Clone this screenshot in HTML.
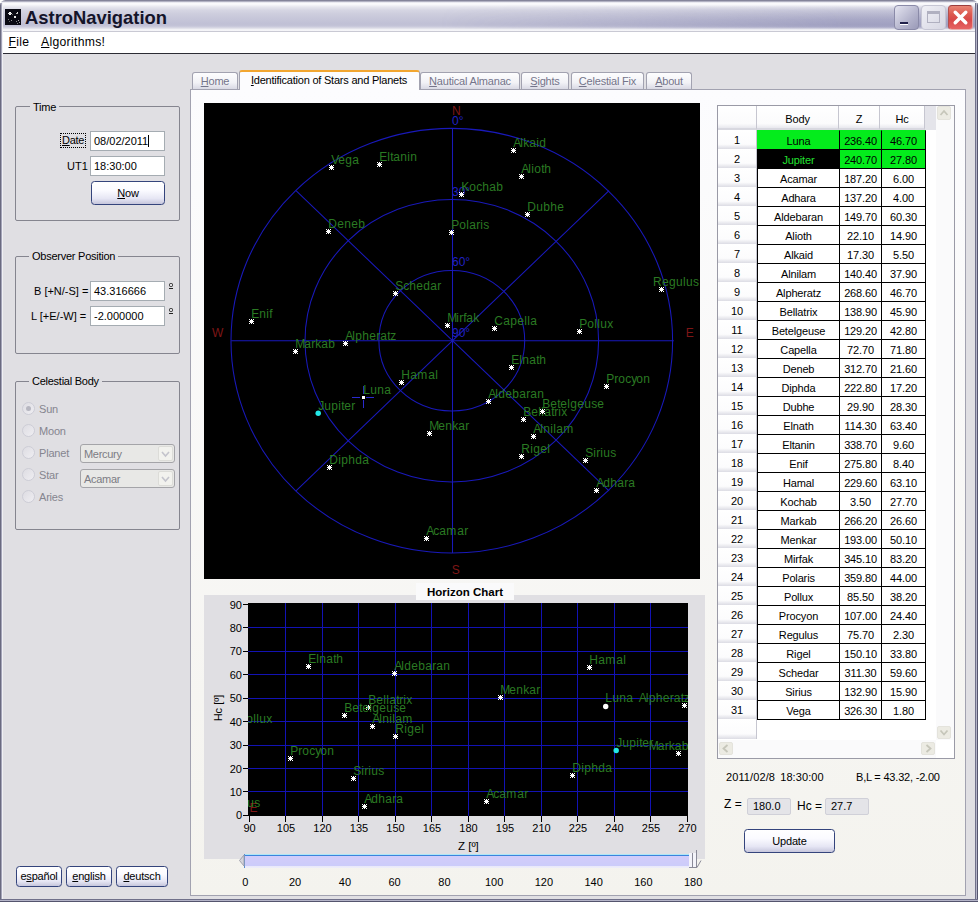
<!DOCTYPE html>
<html><head><meta charset="utf-8"><title>AstroNavigation</title>
<style>
*{box-sizing:border-box;margin:0;padding:0}
html,body{width:978px;height:902px;overflow:hidden;background:#e0dfe3}
body{position:relative;font-family:"Liberation Sans",sans-serif;font-size:11px;color:#000;line-height:13px}
.abs{position:absolute}
u{text-decoration:underline}
/* title bar */
#title{left:0;top:0;width:978px;height:32px;background:linear-gradient(#7c7c92 0,#8c8ca2 1px,#d8d8e4 2px,#fbfbfd 3px,#f8f8fb 4.5px,#e6e6ee 7px,#d6d6e3 10px,#cdcddd 14px,#c6c6d9 19px,#c0c0d5 24px,#c4c4d8 26px,#dadae5 28px,#f2f2f6 29.5px,#f6f6f9 31px,#9c9cae 32px)}
#title2{left:440px;top:0;width:538px;height:32px;background:linear-gradient(rgba(100,100,150,0) 0,rgba(100,100,150,0) 5px,rgba(100,100,155,.12) 10px,rgba(100,100,155,.3) 20px,rgba(100,100,155,.36) 27px,rgba(100,100,155,.1) 29px,rgba(100,100,150,0) 30px);-webkit-mask-image:linear-gradient(90deg,transparent 0,#000 75%);mask-image:linear-gradient(90deg,transparent 0,#000 75%)}
#ttext{left:25px;top:7px;font-weight:bold;font-size:18.4px;line-height:22px;color:#14142a;white-space:nowrap}
#icon{left:5px;top:9px;width:16px;height:16px;background:#0a0a14}
.wb{top:5px;width:25px;height:25px;border-radius:4px}
/* menu */
#menu{left:3px;top:32px;width:972px;height:22px;background:#fff;border-bottom:1px solid #2c2c34}
#menu span{position:absolute;top:2.8px;font-size:12.2px;line-height:15px;letter-spacing:.3px}
/* borders */
.bl{left:0;top:3px;width:3px;height:899px;background:linear-gradient(90deg,#6a6a80 0,#6a6a80 1px,#a4a4b8 1px,#a4a4b8 2px,#f0f0f4 2px,#f0f0f4 3px)}
.br{left:975px;top:3px;width:3px;height:899px;background:linear-gradient(90deg,#70708a 0,#70708a 1px,#b4b4c8 1px,#b4b4c8 2px,#55556e 2px,#55556e 3px)}
.bb{left:0;top:899px;width:978px;height:3px;background:linear-gradient(#70708a 0,#70708a 1px,#b4b4c8 1px,#b4b4c8 2px,#55556e 2px,#55556e 3px)}
/* group boxes */
.gb{border:1px solid #85858f;border-radius:2px}
.gbl{background:#e0dfe3;padding:0 3px;white-space:nowrap;letter-spacing:-.25px}
.inp{background:#fff;border:1px solid #a5acb2;padding:3.5px 0 0 3px;white-space:nowrap;height:20px;margin-top:-.5px}
.btn{letter-spacing:-.2px;border:1px solid #34447c;border-radius:3.5px;background:linear-gradient(#ffffff 0,#fafaff 40%,#e6e6f4 75%,#c6c6dc 100%);text-align:center;white-space:nowrap}
.dis{color:#85858f;letter-spacing:-.2px;margin-top:.8px}
.ord{width:4px;height:4px;border:1px solid #222;border-radius:1.5px}
.ord:after{content:'';position:absolute;left:-1px;top:4px;width:4px;height:1px;background:#222}
.radio{width:13px;height:13px;border-radius:50%;border:1px solid #cdcdd6;background:linear-gradient(135deg,#dddce2,#efeef2)}
.combo{border:1px solid #a4a4a8;border-radius:3px;background:#e8e8e6;color:#7c7c84;height:19px;padding:3px 0 0 3px;letter-spacing:-.3px}
.cbtn{width:15px;height:15px;border:1px solid #dcdcd8;border-radius:2px;background:#f2f2ee}
/* tabs */
.tab{top:72px;letter-spacing:-.2px;height:17px;border:1px solid #a2a2b0;border-bottom:none;border-radius:3px 3px 0 0;background:linear-gradient(#fdfdfe 0,#f2f2f6 60%,#d9d9e4 100%);color:#74748a;text-align:center;padding-top:2px;white-space:nowrap}
.tabsel{top:70px;height:20px;letter-spacing:-.22px;text-indent:-1px;border:1px solid #a2a2b0;border-top:2px solid #f2a630;border-bottom:none;border-radius:3px 3px 0 0;background:#fcfcfe;color:#000;text-align:center;padding-top:1.7px;white-space:nowrap}
#page{left:190px;top:89px;width:776px;height:807px;border:1px solid #a2a2b0;background:linear-gradient(#fcfcfe,#f4f3ee)}
/* horizon */
#hpanel{left:204px;top:595px;width:501px;height:264px;background:#e0dfe3}
#htitle{left:416px;top:583px;width:98px;height:17px;background:#fafafb;font-weight:bold;font-size:11.5px;text-align:center;padding-top:3px}
.tick{background:#000}
.axl{font-size:11px;line-height:14px}
/* table */
.grid{background:#fff;border:1px solid #9a9aa6}
.hdr{background:#e4e4ea}
.hcell{background:linear-gradient(#ffffff 0,#fbfbfc 80%,#e8e8ee 100%);border-right:1px solid #c6c6d0;border-bottom:2px solid #d8d8e0;text-align:center;padding-top:7px;font-size:11px;letter-spacing:-.1px}
.rh{background:linear-gradient(#ffffff 0,#fcfcfd 75%,#dcdce4 100%);border-right:1px solid #c6c6d0;text-align:center;padding-top:4px}
.c{border:1px solid #000;background:#fff;text-align:center;padding-top:4px;letter-spacing:-.15px}
.g{background:#04ec1c}
.g1{border-top-color:#04ec1c}
.gl{border-left-color:#04ec1c}
.k{background:#000;color:#22e030}
.ro{background:#e4e4e8;border:1px solid #d0d0d8;border-radius:2px;height:17px;padding:1px 0 0 5px}
.sb{background:#fafafb}
.sbtn{border:1px solid #e4e3dc;border-radius:2px;background:#ecebe3}
</style></head><body>

<!-- window frame -->
<div class="abs" id="title"></div><div class="abs" id="title2"></div>
<div class="abs bl"></div><div class="abs br"></div><div class="abs bb"></div>
<svg class="abs" style="left:0;top:0" width="6" height="6"><path d="M0 0h5.5A5.5 5.5 0 0 0 0 5.5z" fill="#fff"/></svg>
<svg class="abs" style="left:972px;top:0" width="6" height="6"><path d="M6 0h-5.5A5.5 5.5 0 0 1 6 5.5z" fill="#fff"/></svg>
<div class="abs" id="icon">
<svg width="16" height="16"><g fill="#fff"><rect x="4" y="3" width="2" height="3"/><rect x="3" y="4" width="4" height="1" fill="#ddd"/><rect x="9" y="7" width="2" height="2" fill="#e8e8e8"/><rect x="12" y="3" width="1" height="2" fill="#ddd"/><rect x="11" y="4" width="2" height="1" fill="#bbb"/><rect x="3" y="10" width="1" height="1" fill="#777"/><rect x="6" y="11" width="1" height="1" fill="#999"/><rect x="4" y="12" width="1" height="1" fill="#666"/><rect x="11" y="12" width="1" height="1" fill="#888"/><rect x="13" y="11" width="1" height="1" fill="#aaa"/><rect x="14" y="13" width="1" height="1" fill="#999"/><rect x="12" y="14" width="1" height="1" fill="#777"/><rect x="7" y="5" width="1" height="1" fill="#666"/></g></svg>
</div>
<div class="abs" id="ttext">AstroNavigation</div>
<!-- window buttons -->
<div class="abs wb" style="left:894px;border:1px solid #8a8aa8;background:linear-gradient(135deg,#e4e4f0,#b4b4cc 60%,#9a9ab8)"><div class="abs" style="left:5px;top:16px;width:8px;height:3px;background:#20204a;border-bottom:1px solid #fff"></div></div>
<div class="abs wb" style="left:921px;border:1px solid #c6c6d4;background:linear-gradient(135deg,#f0f0f6,#d6d6e2)"><div class="abs" style="left:5px;top:5px;width:13px;height:12px;border:1px solid #b0b0c0;border-top:3px solid #b0b0c0"></div></div>
<div class="abs wb" style="left:948px;border:1px solid #b05050;border-top-color:#9a3c3c;border-bottom-color:#e8b0b0;border-right-color:#e0a0a0;background:linear-gradient(#e88474 0,#dc5a50 35%,#d84848 60%,#e66464 100%)">
<svg class="abs" style="left:3px;top:3px" width="17" height="17"><path d="M3.2 3.2L13.8 13.8M13.8 3.2L3.2 13.8" stroke="#fff" stroke-width="3.4" stroke-linecap="round"/></svg></div>

<div class="abs" id="menu"><span style="left:5.5px"><u>F</u>ile</span><span style="left:38px"><u>A</u>lgorithms!</span></div>

<!-- left panel -->

<div class="abs gb" style="left:15px;top:105.5px;width:165px;height:115.5px"></div>
<div class="abs gbl" style="left:30px;top:100.5px">Time</div>
<div class="abs" style="left:60px;top:133px;border:1px dotted #000;padding:0 1px;height:15px;letter-spacing:-.3px"><u>D</u>ate</div>
<div class="abs inp" style="left:90px;top:131px;width:75px">08/02/2011<span style="border-right:1px solid #000;margin-left:0"></span></div>
<div class="abs" style="left:67px;top:160px">UT1</div>
<div class="abs inp" style="left:90px;top:156px;width:75px">18:30:00</div>
<div class="abs btn" style="left:91px;top:181px;width:74px;height:24px;padding-top:5px"><u>N</u>ow</div>

<div class="abs gb" style="left:15px;top:256px;width:165px;height:98px"></div>
<div class="abs gbl" style="left:29px;top:249.5px">Observer Position</div>
<div class="abs" style="left:34px;top:285px;white-space:nowrap">B [+N/-S] =</div>
<div class="abs inp" style="left:90px;top:281px;width:75px">43.316666</div>
<div class="abs ord" style="left:169px;top:283px"></div>
<div class="abs" style="left:31px;top:310px;white-space:nowrap">L [+E/-W] =</div>
<div class="abs inp" style="left:90px;top:306px;width:75px">-2.000000</div>
<div class="abs ord" style="left:169px;top:308px"></div>

<div class="abs gb" style="left:15px;top:380.5px;width:165px;height:149px"></div>
<div class="abs gbl" style="left:29px;top:374.5px">Celestial Body</div>
<div class="abs radio" style="left:22px;top:402px"><div class="abs" style="left:3px;top:3px;width:5px;height:5px;border-radius:50%;background:#b6b6c0"></div></div>
<div class="abs dis" style="left:39px;top:402px">Sun</div>
<div class="abs radio" style="left:22px;top:424px"></div>
<div class="abs dis" style="left:39px;top:424px">Moon</div>
<div class="abs radio" style="left:22px;top:446px"></div>
<div class="abs dis" style="left:39px;top:446px">Planet</div>
<div class="abs radio" style="left:22px;top:468px"></div>
<div class="abs dis" style="left:39px;top:468px">Star</div>
<div class="abs radio" style="left:22px;top:490px"></div>
<div class="abs dis" style="left:39px;top:490px">Aries</div>
<div class="abs combo" style="left:80px;top:444px;width:95px">Mercury</div>
<div class="abs cbtn" style="left:158px;top:446px"><svg width="13" height="13"><path d="M3 5l3.5 4L10 5" stroke="#c4c4cc" stroke-width="1.6" fill="none"/></svg></div>
<div class="abs combo" style="left:80px;top:469px;width:95px">Acamar</div>
<div class="abs cbtn" style="left:158px;top:471px"><svg width="13" height="13"><path d="M3 5l3.5 4L10 5" stroke="#c4c4cc" stroke-width="1.6" fill="none"/></svg></div>

<div class="abs btn" style="left:16px;top:866px;width:46px;height:21px;padding-top:3px">e<u>s</u>pañol</div>
<div class="abs btn" style="left:66px;top:866px;width:46px;height:21px;padding-top:3px"><u>e</u>nglish</div>
<div class="abs btn" style="left:116px;top:866px;width:52px;height:21px;padding-top:3px"><u>d</u>eutsch</div>

<!-- tabs -->
<div class="abs" id="page"></div>
<div class="abs tab" style="left:192px;width:46px"><u>H</u>ome</div>
<div class="abs tabsel" style="left:239px;width:181px"><u>I</u>dentification of Stars and Planets</div>
<div class="abs tab" style="left:420px;width:100px"><u>N</u>autical Almanac</div>
<div class="abs tab" style="left:521px;width:48px"><u>S</u>ights</div>
<div class="abs tab" style="left:571px;width:73px"><u>C</u>elestial Fix</div>
<div class="abs tab" style="left:646px;width:46px"><u>A</u>bout</div>

<svg class="abs" style="left:204px;top:103px" width="496" height="476" viewBox="0 0 496 476">
<rect width="496" height="476" fill="#000"/>
<g fill="none" stroke="#1919ba" stroke-width="1.05">
<ellipse cx="247.8" cy="237.7" rx="220.8" ry="212.3"/>
<ellipse cx="247.8" cy="237.7" rx="146.8" ry="141.3"/>
<ellipse cx="247.8" cy="237.7" rx="72.9" ry="70.3"/>
<path d="M27.19999999999999 237.7H469.8 M248.5 25.399999999999977V450.0"/>
<path d="M92.0 87.6L405.0 387.8 M92.0 387.8L405.0 87.6"/>
</g>
<g font-family="Liberation Sans, sans-serif" font-size="12">
<text x="248" y="11.6" fill="#7e1616">N</text>
<text x="247.7" y="471" fill="#7e1616">S</text>
<text x="8" y="233.5" fill="#7e1616">W</text>
<text x="481.8" y="233.9" fill="#7e1616">E</text>
<text x="248.0" y="21.8" fill="#2020c4">0°</text>
<text x="248.0" y="92.6" fill="#2020c4">30°</text>
<text x="248.0" y="163.3" fill="#2020c4">60°</text>
<text x="248.0" y="233.7" fill="#2020c4">90°</text>
<path stroke="#2a2ad0" stroke-width="1" d="M148 294.5h8 M162 294.5h8 M159.5 283v8 M159.5 297v8"/>
<rect x="158" y="293" width="3" height="3" fill="#fff"/>
<text x="159.2 166.2 173.2 180.2" y="291.0" fill="#2b7a23">Luna</text>
<circle cx="114.2" cy="310.2" r="2.7" fill="#22e8e8"/>
<text x="114.2 120.2 127.2 134.2 137.2 140.2 147.2" y="307.0" fill="#2b7a23">Jupiter</text>
<path fill="#fff" d="M221 434h3v3h-3z M220 435h5v1h-5z M222 433h1v5h-1z M220 433h1v1h-1z M224 433h1v1h-1z M220 437h1v1h-1z M224 437h1v1h-1z"/>
<text x="222.2 229.2 235.2 242.2 253.2 260.2" y="432.0" fill="#2b7a23">Acamar</text>
<path fill="#fff" d="M391 386h3v3h-3z M390 387h5v1h-5z M392 385h1v5h-1z M390 385h1v1h-1z M394 385h1v1h-1z M390 389h1v1h-1z M394 389h1v1h-1z"/>
<text x="392.2 399.2 406.2 413.2 420.2 424.2" y="384.0" fill="#2b7a23">Adhara</text>
<path fill="#fff" d="M283 297h3v3h-3z M282 298h5v1h-5z M284 296h1v5h-1z M282 296h1v1h-1z M286 296h1v1h-1z M282 300h1v1h-1z M286 300h1v1h-1z"/>
<text x="284.2 291.2 294.2 301.2 308.2 315.2 322.2 326.2 333.2" y="295.0" fill="#2b7a23">Aldebaran</text>
<path fill="#fff" d="M316 72h3v3h-3z M315 73h5v1h-5z M317 71h1v5h-1z M315 71h1v1h-1z M319 71h1v1h-1z M315 75h1v1h-1z M319 75h1v1h-1z"/>
<text x="317.2 324.2 327.2 330.2 337.2 340.2" y="70.0" fill="#2b7a23">Alioth</text>
<path fill="#fff" d="M308 46h3v3h-3z M307 47h5v1h-5z M309 45h1v5h-1z M307 45h1v1h-1z M311 45h1v1h-1z M307 49h1v1h-1z M311 49h1v1h-1z"/>
<text x="309.2 316.2 319.2 325.2 332.2 335.2" y="44.0" fill="#2b7a23">Alkaid</text>
<path fill="#fff" d="M328 332h3v3h-3z M327 333h5v1h-5z M329 331h1v5h-1z M327 331h1v1h-1z M331 331h1v1h-1z M327 335h1v1h-1z M331 335h1v1h-1z"/>
<text x="329.2 336.2 339.2 346.2 349.2 352.2 359.2" y="330.0" fill="#2b7a23">Alnilam</text>
<path fill="#fff" d="M140 239h3v3h-3z M139 240h5v1h-5z M141 238h1v5h-1z M139 238h1v1h-1z M143 238h1v1h-1z M139 242h1v1h-1z M143 242h1v1h-1z"/>
<text x="141.2 148.2 151.2 158.2 165.2 172.2 176.2 183.2 186.2" y="237.0" fill="#2b7a23">Alpheratz</text>
<path fill="#fff" d="M318 315h3v3h-3z M317 316h5v1h-5z M319 314h1v5h-1z M317 314h1v1h-1z M321 314h1v1h-1z M317 318h1v1h-1z M321 318h1v1h-1z"/>
<text x="319.2 327.2 334.2 337.2 340.2 347.2 350.2 354.2 357.2" y="313.0" fill="#2b7a23">Bellatrix</text>
<path fill="#fff" d="M337 307h3v3h-3z M336 308h5v1h-5z M338 306h1v5h-1z M336 306h1v1h-1z M340 306h1v1h-1z M336 310h1v1h-1z M340 310h1v1h-1z"/>
<text x="338.2 346.2 353.2 356.2 363.2 366.2 373.2 380.2 387.2 393.2" y="305.0" fill="#2b7a23">Betelgeuse</text>
<path fill="#fff" d="M289 224h3v3h-3z M288 225h5v1h-5z M290 223h1v5h-1z M288 223h1v1h-1z M292 223h1v1h-1z M288 227h1v1h-1z M292 227h1v1h-1z"/>
<text x="290.2 299.2 306.2 313.2 320.2 323.2 326.2" y="222.0" fill="#2b7a23">Capella</text>
<path fill="#fff" d="M123 127h3v3h-3z M122 128h5v1h-5z M124 126h1v5h-1z M122 126h1v1h-1z M126 126h1v1h-1z M122 130h1v1h-1z M126 130h1v1h-1z"/>
<text x="124.2 133.2 140.2 147.2 154.2" y="125.0" fill="#2b7a23">Deneb</text>
<path fill="#fff" d="M124 363h3v3h-3z M123 364h5v1h-5z M125 362h1v5h-1z M123 362h1v1h-1z M127 362h1v1h-1z M123 366h1v1h-1z M127 366h1v1h-1z"/>
<text x="125.2 134.2 137.2 144.2 151.2 158.2" y="361.0" fill="#2b7a23">Diphda</text>
<path fill="#fff" d="M322 110h3v3h-3z M321 111h5v1h-5z M323 109h1v5h-1z M321 109h1v1h-1z M325 109h1v1h-1z M321 113h1v1h-1z M325 113h1v1h-1z"/>
<text x="323.2 332.2 339.2 346.2 353.2" y="108.0" fill="#2b7a23">Dubhe</text>
<path fill="#fff" d="M306 263h3v3h-3z M305 264h5v1h-5z M307 262h1v5h-1z M305 262h1v1h-1z M309 262h1v1h-1z M305 266h1v1h-1z M309 266h1v1h-1z"/>
<text x="307.2 315.2 318.2 325.2 332.2 335.2" y="261.0" fill="#2b7a23">Elnath</text>
<path fill="#fff" d="M174 60h3v3h-3z M173 61h5v1h-5z M175 59h1v5h-1z M173 59h1v1h-1z M177 59h1v1h-1z M173 63h1v1h-1z M177 63h1v1h-1z"/>
<text x="175.2 183.2 186.2 189.2 196.2 203.2 206.2" y="58.0" fill="#2b7a23">Eltanin</text>
<path fill="#fff" d="M46 217h3v3h-3z M45 218h5v1h-5z M47 216h1v5h-1z M45 216h1v1h-1z M49 216h1v1h-1z M45 220h1v1h-1z M49 220h1v1h-1z"/>
<text x="47.2 55.2 62.2 65.2" y="215.0" fill="#2b7a23">Enif</text>
<path fill="#fff" d="M196 278h3v3h-3z M195 279h5v1h-5z M197 277h1v5h-1z M195 277h1v1h-1z M199 277h1v1h-1z M195 281h1v1h-1z M199 281h1v1h-1z"/>
<text x="197.2 206.2 213.2 224.2 231.2" y="276.0" fill="#2b7a23">Hamal</text>
<path fill="#fff" d="M256 90h3v3h-3z M255 91h5v1h-5z M257 89h1v5h-1z M255 89h1v1h-1z M259 89h1v1h-1z M255 93h1v1h-1z M259 93h1v1h-1z"/>
<text x="257.2 265.2 272.2 278.2 285.2 292.2" y="88.0" fill="#2b7a23">Kochab</text>
<path fill="#fff" d="M90 247h3v3h-3z M89 248h5v1h-5z M91 246h1v5h-1z M89 246h1v1h-1z M93 246h1v1h-1z M89 250h1v1h-1z M93 250h1v1h-1z"/>
<text x="91.2 100.2 107.2 111.2 117.2 124.2" y="245.0" fill="#2b7a23">Markab</text>
<path fill="#fff" d="M224 329h3v3h-3z M223 330h5v1h-5z M225 328h1v5h-1z M223 328h1v1h-1z M227 328h1v1h-1z M223 332h1v1h-1z M227 332h1v1h-1z"/>
<text x="225.2 234.2 241.2 248.2 254.2 261.2" y="327.0" fill="#2b7a23">Menkar</text>
<path fill="#fff" d="M242 221h3v3h-3z M241 222h5v1h-5z M243 220h1v5h-1z M241 220h1v1h-1z M245 220h1v1h-1z M241 224h1v1h-1z M245 224h1v1h-1z"/>
<text x="243.2 252.2 255.2 259.2 262.2 269.2" y="219.0" fill="#2b7a23">Mirfak</text>
<path fill="#fff" d="M246 128h3v3h-3z M245 129h5v1h-5z M247 127h1v5h-1z M245 127h1v1h-1z M249 127h1v1h-1z M245 131h1v1h-1z M249 131h1v1h-1z"/>
<text x="247.2 255.2 262.2 265.2 272.2 276.2 279.2" y="126.0" fill="#2b7a23">Polaris</text>
<path fill="#fff" d="M374 227h3v3h-3z M373 228h5v1h-5z M375 226h1v5h-1z M373 226h1v1h-1z M377 226h1v1h-1z M373 230h1v1h-1z M377 230h1v1h-1z"/>
<text x="375.2 383.2 390.2 393.2 396.2 403.2" y="225.0" fill="#2b7a23">Pollux</text>
<path fill="#fff" d="M401 282h3v3h-3z M400 283h5v1h-5z M402 281h1v5h-1z M400 281h1v1h-1z M404 281h1v1h-1z M400 285h1v1h-1z M404 285h1v1h-1z"/>
<text x="402.2 410.2 414.2 421.2 427.2 432.2 439.2" y="280.0" fill="#2b7a23">Procyon</text>
<path fill="#fff" d="M456 185h3v3h-3z M455 186h5v1h-5z M457 184h1v5h-1z M455 184h1v1h-1z M459 184h1v1h-1z M455 188h1v1h-1z M459 188h1v1h-1z"/>
<text x="449.0 458.0 465.0 472.0 479.0 482.0 489.0" y="183.0" fill="#2b7a23">Regulus</text>
<path fill="#fff" d="M316 352h3v3h-3z M315 353h5v1h-5z M317 351h1v5h-1z M315 351h1v1h-1z M319 351h1v1h-1z M315 355h1v1h-1z M319 355h1v1h-1z"/>
<text x="317.2 326.2 329.2 336.2 343.2" y="350.0" fill="#2b7a23">Rigel</text>
<path fill="#fff" d="M190 189h3v3h-3z M189 190h5v1h-5z M191 188h1v5h-1z M189 188h1v1h-1z M193 188h1v1h-1z M189 192h1v1h-1z M193 192h1v1h-1z"/>
<text x="191.2 199.2 205.2 212.2 219.2 226.2 233.2" y="187.0" fill="#2b7a23">Schedar</text>
<path fill="#fff" d="M380 356h3v3h-3z M379 357h5v1h-5z M381 355h1v5h-1z M379 355h1v1h-1z M383 355h1v1h-1z M379 359h1v1h-1z M383 359h1v1h-1z"/>
<text x="381.2 389.2 392.2 396.2 399.2 406.2" y="354.0" fill="#2b7a23">Sirius</text>
<path fill="#fff" d="M126 63h3v3h-3z M125 64h5v1h-5z M127 62h1v5h-1z M125 62h1v1h-1z M129 62h1v1h-1z M125 66h1v1h-1z M129 66h1v1h-1z"/>
<text x="127.2 134.2 141.2 148.2" y="61.0" fill="#2b7a23">Vega</text>
</g></svg>

<div class="abs" id="hpanel"></div>
<div class="abs" id="htitle">Horizon Chart</div>
<svg class="abs" style="left:248px;top:603px" width="440" height="213" viewBox="0 0 440 213">
<rect width="440" height="213" fill="#000"/>
<path d="M37.5 0V213 M74.5 0V213 M110.5 0V213 M147.5 0V213 M183.5 0V213 M220.5 0V213 M256.5 0V213 M293.5 0V213 M329.5 0V213 M366.5 0V213 M402.5 0V213 M0 188.5H440 M0 165.5H440 M0 142.5H440 M0 118.5H440 M0 95.5H440 M0 71.5H440 M0 48.5H440 M0 24.5H440 " stroke="#1212b4" stroke-width="1" fill="none"/>
<g font-family="Liberation Sans, sans-serif" font-size="12">
<text x="1.5" y="208.5" fill="#7e1616">E</text>
<circle cx="357.7" cy="103.5" r="2.7" fill="#fff"/>
<text x="357.2 364.2 371.2 378.2" y="99.4" fill="#2b7a23">Luna</text>
<circle cx="368.2" cy="147.5" r="2.7" fill="#22e8e8"/>
<text x="368.2 374.2 381.2 388.2 391.2 394.2 401.2" y="144.4" fill="#2b7a23">Jupiter</text>
<path fill="#fff" d="M237 197h3v3h-3z M236 198h5v1h-5z M238 196h1v5h-1z M236 196h1v1h-1z M240 196h1v1h-1z M236 200h1v1h-1z M240 200h1v1h-1z"/>
<text x="238.2 245.2 251.2 258.2 269.2 276.2" y="195.4" fill="#2b7a23">Acamar</text>
<path fill="#fff" d="M115 202h3v3h-3z M114 203h5v1h-5z M116 201h1v5h-1z M114 201h1v1h-1z M118 201h1v1h-1z M114 205h1v1h-1z M118 205h1v1h-1z"/>
<text x="116.2 123.2 130.2 137.2 144.2 148.2" y="200.4" fill="#2b7a23">Adhara</text>
<path fill="#fff" d="M145 69h3v3h-3z M144 70h5v1h-5z M146 68h1v5h-1z M144 68h1v1h-1z M148 68h1v1h-1z M144 72h1v1h-1z M148 72h1v1h-1z"/>
<text x="146.2 153.2 156.2 163.2 170.2 177.2 184.2 188.2 195.2" y="67.4" fill="#2b7a23">Aldebaran</text>
<path fill="#fff" d="M123 122h3v3h-3z M122 123h5v1h-5z M124 121h1v5h-1z M122 121h1v1h-1z M126 121h1v1h-1z M122 125h1v1h-1z M126 125h1v1h-1z"/>
<text x="124.2 131.2 134.2 141.2 144.2 147.2 154.2" y="120.4" fill="#2b7a23">Alnilam</text>
<path fill="#fff" d="M435 101h3v3h-3z M434 102h5v1h-5z M436 100h1v5h-1z M434 100h1v1h-1z M438 100h1v1h-1z M434 104h1v1h-1z M438 104h1v1h-1z"/>
<text x="390.7 397.7 400.7 407.7 414.7 421.7 425.7 432.7 435.7" y="99.4" fill="#2b7a23">Alpheratz</text>
<path fill="#fff" d="M119 103h3v3h-3z M118 104h5v1h-5z M120 102h1v5h-1z M118 102h1v1h-1z M122 102h1v1h-1z M118 106h1v1h-1z M122 106h1v1h-1z"/>
<text x="120.2 128.2 135.2 138.2 141.2 148.2 151.2 155.2 158.2" y="101.4" fill="#2b7a23">Bellatrix</text>
<path fill="#fff" d="M95 111h3v3h-3z M94 112h5v1h-5z M96 110h1v5h-1z M94 110h1v1h-1z M98 110h1v1h-1z M94 114h1v1h-1z M98 114h1v1h-1z"/>
<text x="96.2 104.2 111.2 114.2 121.2 124.2 131.2 138.2 145.2 151.2" y="109.4" fill="#2b7a23">Betelgeuse</text>
<path fill="#fff" d="M323 171h3v3h-3z M322 172h5v1h-5z M324 170h1v5h-1z M322 170h1v1h-1z M326 170h1v1h-1z M322 174h1v1h-1z M326 174h1v1h-1z"/>
<text x="324.2 333.2 336.2 343.2 350.2 357.2" y="169.4" fill="#2b7a23">Diphda</text>
<path fill="#fff" d="M59 62h3v3h-3z M58 63h5v1h-5z M60 61h1v5h-1z M58 61h1v1h-1z M62 61h1v1h-1z M58 65h1v1h-1z M62 65h1v1h-1z"/>
<text x="60.2 68.2 71.2 78.2 85.2 88.2" y="60.4" fill="#2b7a23">Elnath</text>
<path fill="#fff" d="M340 63h3v3h-3z M339 64h5v1h-5z M341 62h1v5h-1z M339 62h1v1h-1z M343 62h1v1h-1z M339 66h1v1h-1z M343 66h1v1h-1z"/>
<text x="341.2 350.2 357.2 368.2 375.2" y="61.4" fill="#2b7a23">Hamal</text>
<path fill="#fff" d="M429 149h3v3h-3z M428 150h5v1h-5z M430 148h1v5h-1z M428 148h1v1h-1z M432 148h1v1h-1z M428 152h1v1h-1z M432 152h1v1h-1z"/>
<text x="400.7 409.7 416.7 420.7 426.7 433.7" y="147.4" fill="#2b7a23">Markab</text>
<path fill="#fff" d="M251 93h3v3h-3z M250 94h5v1h-5z M252 92h1v5h-1z M250 92h1v1h-1z M254 92h1v1h-1z M250 96h1v1h-1z M254 96h1v1h-1z"/>
<text x="252.2 261.2 268.2 275.2 281.2 288.2" y="91.4" fill="#2b7a23">Menkar</text>
<text x="-9.8 -1.8 5.2 8.2 11.2 18.2" y="120.4" fill="#2b7a23">Pollux</text>
<path fill="#fff" d="M41 154h3v3h-3z M40 155h5v1h-5z M42 153h1v5h-1z M40 153h1v1h-1z M44 153h1v1h-1z M40 157h1v1h-1z M44 157h1v1h-1z"/>
<text x="42.2 50.2 54.2 61.2 67.2 72.2 79.2" y="152.4" fill="#2b7a23">Procyon</text>
<text x="-33.8 -24.8 -17.8 -10.8 -3.8 -0.8 6.2" y="204.4" fill="#2b7a23">Regulus</text>
<path fill="#fff" d="M146 132h3v3h-3z M145 133h5v1h-5z M147 131h1v5h-1z M145 131h1v1h-1z M149 131h1v1h-1z M145 135h1v1h-1z M149 135h1v1h-1z"/>
<text x="147.2 156.2 159.2 166.2 173.2" y="130.4" fill="#2b7a23">Rigel</text>
<path fill="#fff" d="M104 174h3v3h-3z M103 175h5v1h-5z M105 173h1v5h-1z M103 173h1v1h-1z M107 173h1v1h-1z M103 177h1v1h-1z M107 177h1v1h-1z"/>
<text x="105.2 113.2 116.2 120.2 123.2 130.2" y="172.4" fill="#2b7a23">Sirius</text>
</g></svg>
<div class="abs tick" style="left:243px;top:815px;width:5px;height:1px"></div>
<div class="abs axl" style="left:214px;top:808.3px;width:28px;text-align:right">0</div>
<div class="abs tick" style="left:243px;top:791px;width:5px;height:1px"></div>
<div class="abs axl" style="left:214px;top:784.9px;width:28px;text-align:right">10</div>
<div class="abs tick" style="left:243px;top:768px;width:5px;height:1px"></div>
<div class="abs axl" style="left:214px;top:761.5px;width:28px;text-align:right">20</div>
<div class="abs tick" style="left:243px;top:745px;width:5px;height:1px"></div>
<div class="abs axl" style="left:214px;top:738.0px;width:28px;text-align:right">30</div>
<div class="abs tick" style="left:243px;top:721px;width:5px;height:1px"></div>
<div class="abs axl" style="left:214px;top:714.6px;width:28px;text-align:right">40</div>
<div class="abs tick" style="left:243px;top:698px;width:5px;height:1px"></div>
<div class="abs axl" style="left:214px;top:691.2px;width:28px;text-align:right">50</div>
<div class="abs tick" style="left:243px;top:674px;width:5px;height:1px"></div>
<div class="abs axl" style="left:214px;top:667.8px;width:28px;text-align:right">60</div>
<div class="abs tick" style="left:243px;top:651px;width:5px;height:1px"></div>
<div class="abs axl" style="left:214px;top:644.4px;width:28px;text-align:right">70</div>
<div class="abs tick" style="left:243px;top:627px;width:5px;height:1px"></div>
<div class="abs axl" style="left:214px;top:620.9px;width:28px;text-align:right">80</div>
<div class="abs tick" style="left:243px;top:604px;width:5px;height:1px"></div>
<div class="abs axl" style="left:214px;top:597.5px;width:28px;text-align:right">90</div>
<div class="abs tick" style="left:249px;top:816px;width:1px;height:6px"></div>
<div class="abs axl" style="left:229.5px;top:821px;width:40px;text-align:center">90</div>
<div class="abs tick" style="left:285px;top:816px;width:1px;height:6px"></div>
<div class="abs axl" style="left:266.0px;top:821px;width:40px;text-align:center">105</div>
<div class="abs tick" style="left:322px;top:816px;width:1px;height:6px"></div>
<div class="abs axl" style="left:302.5px;top:821px;width:40px;text-align:center">120</div>
<div class="abs tick" style="left:358px;top:816px;width:1px;height:6px"></div>
<div class="abs axl" style="left:339.0px;top:821px;width:40px;text-align:center">135</div>
<div class="abs tick" style="left:395px;top:816px;width:1px;height:6px"></div>
<div class="abs axl" style="left:375.5px;top:821px;width:40px;text-align:center">150</div>
<div class="abs tick" style="left:431px;top:816px;width:1px;height:6px"></div>
<div class="abs axl" style="left:412.0px;top:821px;width:40px;text-align:center">165</div>
<div class="abs tick" style="left:468px;top:816px;width:1px;height:6px"></div>
<div class="abs axl" style="left:448.5px;top:821px;width:40px;text-align:center">180</div>
<div class="abs tick" style="left:504px;top:816px;width:1px;height:6px"></div>
<div class="abs axl" style="left:485.0px;top:821px;width:40px;text-align:center">195</div>
<div class="abs tick" style="left:541px;top:816px;width:1px;height:6px"></div>
<div class="abs axl" style="left:521.5px;top:821px;width:40px;text-align:center">210</div>
<div class="abs tick" style="left:577px;top:816px;width:1px;height:6px"></div>
<div class="abs axl" style="left:558.0px;top:821px;width:40px;text-align:center">225</div>
<div class="abs tick" style="left:614px;top:816px;width:1px;height:6px"></div>
<div class="abs axl" style="left:594.5px;top:821px;width:40px;text-align:center">240</div>
<div class="abs tick" style="left:650px;top:816px;width:1px;height:6px"></div>
<div class="abs axl" style="left:631.0px;top:821px;width:40px;text-align:center">255</div>
<div class="abs tick" style="left:687px;top:816px;width:1px;height:6px"></div>
<div class="abs axl" style="left:667.5px;top:821px;width:40px;text-align:center">270</div>
<div class="abs axl" style="left:458px;top:838.5px;font-size:11.5px">Z [º]</div>
<div class="abs axl" style="left:196px;top:701px;width:44px;text-align:center;transform:rotate(-90deg)">Hc [º]</div>

<!-- slider -->
<div class="abs" style="left:244px;top:854px;width:445px;height:14px;background:linear-gradient(#aee6f6 0,#aee6f6 1px,#3c84dc 1px,#3c84dc 2px,#d2ccfa 2px,#ccccfa 12px,#e8e8fa 12px,#eeeefa 14px);border-left:1px solid #5a8ad0"></div>
<svg class="abs" style="left:238px;top:853px" width="7" height="15"><path d="M6 2v11L1.5 7.5z" fill="#d4d4da" stroke="#a2a2ae"/></svg>
<svg class="abs" style="left:688px;top:848px" width="14" height="21"><path d="M1 5h8v14h-8z" fill="#f4f4fa"/><path d="M4.5 5v14M8.5 2v17M1 19.5h8M9 19.5l4-7" stroke="#8a8a98" stroke-width="1" fill="none"/></svg>
<div class="abs axl" style="left:225.4px;top:875px;width:40px;text-align:center">0</div>
<div class="abs axl" style="left:275.1px;top:875px;width:40px;text-align:center">20</div>
<div class="abs axl" style="left:324.9px;top:875px;width:40px;text-align:center">40</div>
<div class="abs axl" style="left:374.6px;top:875px;width:40px;text-align:center">60</div>
<div class="abs axl" style="left:424.4px;top:875px;width:40px;text-align:center">80</div>
<div class="abs axl" style="left:474.1px;top:875px;width:40px;text-align:center">100</div>
<div class="abs axl" style="left:523.9px;top:875px;width:40px;text-align:center">120</div>
<div class="abs axl" style="left:573.6px;top:875px;width:40px;text-align:center">140</div>
<div class="abs axl" style="left:623.4px;top:875px;width:40px;text-align:center">160</div>
<div class="abs axl" style="left:673.1px;top:875px;width:40px;text-align:center">180</div>

<!-- table -->
<div class="abs grid" style="left:717px;top:105px;width:238px;height:654px"></div>
<div class="abs hdr" style="left:718px;top:106px;width:218px;height:24px"></div>
<div class="abs hcell" style="left:718px;top:106px;width:39px;height:24px"></div>
<div class="abs hcell" style="left:757px;top:106px;width:82px;height:24px">Body</div>
<div class="abs hcell" style="left:839px;top:106px;width:41px;height:24px">Z</div>
<div class="abs hcell" style="left:880px;top:106px;width:45px;height:24px">Hc</div>
<div class="abs rh" style="left:718px;top:130px;width:39px;height:19px">1</div>
<div class="abs c g g1 gl" style="left:757px;top:130px;width:83px;height:20px">Luna</div>
<div class="abs c g g1" style="left:839px;top:130px;width:43px;height:20px">236.40</div>
<div class="abs c g g1" style="left:881px;top:130px;width:45px;height:20px">46.70</div>
<div class="abs rh" style="left:718px;top:149px;width:39px;height:19px">2</div>
<div class="abs c k" style="left:757px;top:149px;width:83px;height:20px">Jupiter</div>
<div class="abs c g" style="left:839px;top:149px;width:43px;height:20px">240.70</div>
<div class="abs c g" style="left:881px;top:149px;width:45px;height:20px">27.80</div>
<div class="abs rh" style="left:718px;top:168px;width:39px;height:19px">3</div>
<div class="abs c" style="left:757px;top:168px;width:83px;height:20px">Acamar</div>
<div class="abs c" style="left:839px;top:168px;width:43px;height:20px">187.20</div>
<div class="abs c" style="left:881px;top:168px;width:45px;height:20px">6.00</div>
<div class="abs rh" style="left:718px;top:187px;width:39px;height:19px">4</div>
<div class="abs c" style="left:757px;top:187px;width:83px;height:20px">Adhara</div>
<div class="abs c" style="left:839px;top:187px;width:43px;height:20px">137.20</div>
<div class="abs c" style="left:881px;top:187px;width:45px;height:20px">4.00</div>
<div class="abs rh" style="left:718px;top:206px;width:39px;height:19px">5</div>
<div class="abs c" style="left:757px;top:206px;width:83px;height:20px">Aldebaran</div>
<div class="abs c" style="left:839px;top:206px;width:43px;height:20px">149.70</div>
<div class="abs c" style="left:881px;top:206px;width:45px;height:20px">60.30</div>
<div class="abs rh" style="left:718px;top:225px;width:39px;height:19px">6</div>
<div class="abs c" style="left:757px;top:225px;width:83px;height:20px">Alioth</div>
<div class="abs c" style="left:839px;top:225px;width:43px;height:20px">22.10</div>
<div class="abs c" style="left:881px;top:225px;width:45px;height:20px">14.90</div>
<div class="abs rh" style="left:718px;top:244px;width:39px;height:19px">7</div>
<div class="abs c" style="left:757px;top:244px;width:83px;height:20px">Alkaid</div>
<div class="abs c" style="left:839px;top:244px;width:43px;height:20px">17.30</div>
<div class="abs c" style="left:881px;top:244px;width:45px;height:20px">5.50</div>
<div class="abs rh" style="left:718px;top:263px;width:39px;height:19px">8</div>
<div class="abs c" style="left:757px;top:263px;width:83px;height:20px">Alnilam</div>
<div class="abs c" style="left:839px;top:263px;width:43px;height:20px">140.40</div>
<div class="abs c" style="left:881px;top:263px;width:45px;height:20px">37.90</div>
<div class="abs rh" style="left:718px;top:282px;width:39px;height:19px">9</div>
<div class="abs c" style="left:757px;top:282px;width:83px;height:20px">Alpheratz</div>
<div class="abs c" style="left:839px;top:282px;width:43px;height:20px">268.60</div>
<div class="abs c" style="left:881px;top:282px;width:45px;height:20px">46.70</div>
<div class="abs rh" style="left:718px;top:301px;width:39px;height:19px">10</div>
<div class="abs c" style="left:757px;top:301px;width:83px;height:20px">Bellatrix</div>
<div class="abs c" style="left:839px;top:301px;width:43px;height:20px">138.90</div>
<div class="abs c" style="left:881px;top:301px;width:45px;height:20px">45.90</div>
<div class="abs rh" style="left:718px;top:320px;width:39px;height:19px">11</div>
<div class="abs c" style="left:757px;top:320px;width:83px;height:20px">Betelgeuse</div>
<div class="abs c" style="left:839px;top:320px;width:43px;height:20px">129.20</div>
<div class="abs c" style="left:881px;top:320px;width:45px;height:20px">42.80</div>
<div class="abs rh" style="left:718px;top:339px;width:39px;height:19px">12</div>
<div class="abs c" style="left:757px;top:339px;width:83px;height:20px">Capella</div>
<div class="abs c" style="left:839px;top:339px;width:43px;height:20px">72.70</div>
<div class="abs c" style="left:881px;top:339px;width:45px;height:20px">71.80</div>
<div class="abs rh" style="left:718px;top:358px;width:39px;height:19px">13</div>
<div class="abs c" style="left:757px;top:358px;width:83px;height:20px">Deneb</div>
<div class="abs c" style="left:839px;top:358px;width:43px;height:20px">312.70</div>
<div class="abs c" style="left:881px;top:358px;width:45px;height:20px">21.60</div>
<div class="abs rh" style="left:718px;top:377px;width:39px;height:19px">14</div>
<div class="abs c" style="left:757px;top:377px;width:83px;height:20px">Diphda</div>
<div class="abs c" style="left:839px;top:377px;width:43px;height:20px">222.80</div>
<div class="abs c" style="left:881px;top:377px;width:45px;height:20px">17.20</div>
<div class="abs rh" style="left:718px;top:396px;width:39px;height:19px">15</div>
<div class="abs c" style="left:757px;top:396px;width:83px;height:20px">Dubhe</div>
<div class="abs c" style="left:839px;top:396px;width:43px;height:20px">29.90</div>
<div class="abs c" style="left:881px;top:396px;width:45px;height:20px">28.30</div>
<div class="abs rh" style="left:718px;top:415px;width:39px;height:19px">16</div>
<div class="abs c" style="left:757px;top:415px;width:83px;height:20px">Elnath</div>
<div class="abs c" style="left:839px;top:415px;width:43px;height:20px">114.30</div>
<div class="abs c" style="left:881px;top:415px;width:45px;height:20px">63.40</div>
<div class="abs rh" style="left:718px;top:434px;width:39px;height:19px">17</div>
<div class="abs c" style="left:757px;top:434px;width:83px;height:20px">Eltanin</div>
<div class="abs c" style="left:839px;top:434px;width:43px;height:20px">338.70</div>
<div class="abs c" style="left:881px;top:434px;width:45px;height:20px">9.60</div>
<div class="abs rh" style="left:718px;top:453px;width:39px;height:19px">18</div>
<div class="abs c" style="left:757px;top:453px;width:83px;height:20px">Enif</div>
<div class="abs c" style="left:839px;top:453px;width:43px;height:20px">275.80</div>
<div class="abs c" style="left:881px;top:453px;width:45px;height:20px">8.40</div>
<div class="abs rh" style="left:718px;top:472px;width:39px;height:19px">19</div>
<div class="abs c" style="left:757px;top:472px;width:83px;height:20px">Hamal</div>
<div class="abs c" style="left:839px;top:472px;width:43px;height:20px">229.60</div>
<div class="abs c" style="left:881px;top:472px;width:45px;height:20px">63.10</div>
<div class="abs rh" style="left:718px;top:491px;width:39px;height:19px">20</div>
<div class="abs c" style="left:757px;top:491px;width:83px;height:20px">Kochab</div>
<div class="abs c" style="left:839px;top:491px;width:43px;height:20px">3.50</div>
<div class="abs c" style="left:881px;top:491px;width:45px;height:20px">27.70</div>
<div class="abs rh" style="left:718px;top:510px;width:39px;height:19px">21</div>
<div class="abs c" style="left:757px;top:510px;width:83px;height:20px">Markab</div>
<div class="abs c" style="left:839px;top:510px;width:43px;height:20px">266.20</div>
<div class="abs c" style="left:881px;top:510px;width:45px;height:20px">26.60</div>
<div class="abs rh" style="left:718px;top:529px;width:39px;height:19px">22</div>
<div class="abs c" style="left:757px;top:529px;width:83px;height:20px">Menkar</div>
<div class="abs c" style="left:839px;top:529px;width:43px;height:20px">193.00</div>
<div class="abs c" style="left:881px;top:529px;width:45px;height:20px">50.10</div>
<div class="abs rh" style="left:718px;top:548px;width:39px;height:19px">23</div>
<div class="abs c" style="left:757px;top:548px;width:83px;height:20px">Mirfak</div>
<div class="abs c" style="left:839px;top:548px;width:43px;height:20px">345.10</div>
<div class="abs c" style="left:881px;top:548px;width:45px;height:20px">83.20</div>
<div class="abs rh" style="left:718px;top:567px;width:39px;height:19px">24</div>
<div class="abs c" style="left:757px;top:567px;width:83px;height:20px">Polaris</div>
<div class="abs c" style="left:839px;top:567px;width:43px;height:20px">359.80</div>
<div class="abs c" style="left:881px;top:567px;width:45px;height:20px">44.00</div>
<div class="abs rh" style="left:718px;top:586px;width:39px;height:19px">25</div>
<div class="abs c" style="left:757px;top:586px;width:83px;height:20px">Pollux</div>
<div class="abs c" style="left:839px;top:586px;width:43px;height:20px">85.50</div>
<div class="abs c" style="left:881px;top:586px;width:45px;height:20px">38.20</div>
<div class="abs rh" style="left:718px;top:605px;width:39px;height:19px">26</div>
<div class="abs c" style="left:757px;top:605px;width:83px;height:20px">Procyon</div>
<div class="abs c" style="left:839px;top:605px;width:43px;height:20px">107.00</div>
<div class="abs c" style="left:881px;top:605px;width:45px;height:20px">24.40</div>
<div class="abs rh" style="left:718px;top:624px;width:39px;height:19px">27</div>
<div class="abs c" style="left:757px;top:624px;width:83px;height:20px">Regulus</div>
<div class="abs c" style="left:839px;top:624px;width:43px;height:20px">75.70</div>
<div class="abs c" style="left:881px;top:624px;width:45px;height:20px">2.30</div>
<div class="abs rh" style="left:718px;top:643px;width:39px;height:19px">28</div>
<div class="abs c" style="left:757px;top:643px;width:83px;height:20px">Rigel</div>
<div class="abs c" style="left:839px;top:643px;width:43px;height:20px">150.10</div>
<div class="abs c" style="left:881px;top:643px;width:45px;height:20px">33.80</div>
<div class="abs rh" style="left:718px;top:662px;width:39px;height:19px">29</div>
<div class="abs c" style="left:757px;top:662px;width:83px;height:20px">Schedar</div>
<div class="abs c" style="left:839px;top:662px;width:43px;height:20px">311.30</div>
<div class="abs c" style="left:881px;top:662px;width:45px;height:20px">59.60</div>
<div class="abs rh" style="left:718px;top:681px;width:39px;height:19px">30</div>
<div class="abs c" style="left:757px;top:681px;width:83px;height:20px">Sirius</div>
<div class="abs c" style="left:839px;top:681px;width:43px;height:20px">132.90</div>
<div class="abs c" style="left:881px;top:681px;width:45px;height:20px">15.90</div>
<div class="abs rh" style="left:718px;top:700px;width:39px;height:19px">31</div>
<div class="abs c" style="left:757px;top:700px;width:83px;height:20px">Vega</div>
<div class="abs c" style="left:839px;top:700px;width:43px;height:20px">326.30</div>
<div class="abs c" style="left:881px;top:700px;width:45px;height:20px">1.80</div>
<div class="abs rh" style="left:718px;top:719px;width:39px;height:20px"></div>
<div class="abs sb" style="left:936px;top:106px;width:18px;height:634px"></div><div class="abs" style="left:936px;top:740px;width:18px;height:18px;background:#fff"></div>
<div class="abs sbtn" style="left:937px;top:106px;width:14px;height:14px"><svg width="12" height="12"><path d="M2.5 8l3.5-4L9.500 8" stroke="#c6c6ba" stroke-width="1.8" fill="none"/></svg></div>
<div class="abs sbtn" style="left:937px;top:726px;width:14px;height:13px"><svg width="12" height="11"><path d="M2.5 3.5l3.5 4L9.500 3.5" stroke="#c6c6ba" stroke-width="1.8" fill="none"/></svg></div>
<div class="abs sb" style="left:718px;top:740px;width:218px;height:18px"></div>
<div class="abs sbtn" style="left:719px;top:742px;width:14px;height:13px"><svg width="12" height="11"><path d="M7.5 2L3.500 5.5L7.5 9" stroke="#c6c6ba" stroke-width="1.8" fill="none"/></svg></div>
<div class="abs sbtn" style="left:921px;top:742px;width:14px;height:13px"><svg width="12" height="11"><path d="M4.5 2l4 3.5L4.500 9" stroke="#c6c6ba" stroke-width="1.8" fill="none"/></svg></div>

<div class="abs" style="left:726px;top:771px;white-space:nowrap;word-spacing:2px;letter-spacing:.1px">2011/02/8 18:30:00</div>
<div class="abs" style="left:856px;top:771px;white-space:nowrap;letter-spacing:-.2px">B,L = 43.32, -2.00</div>
<div class="abs" style="left:724px;top:798px;font-size:12px;white-space:nowrap">Z =</div>
<div class="abs ro" style="left:747px;top:798px;width:44px">180.0</div>
<div class="abs" style="left:797px;top:800px;font-size:12px;white-space:nowrap">Hc =</div>
<div class="abs ro" style="left:825px;top:798px;width:44px">27.7</div>
<div class="abs btn" style="left:744px;top:829px;width:91px;height:24px;padding-top:5px">Update</div>

</body></html>
